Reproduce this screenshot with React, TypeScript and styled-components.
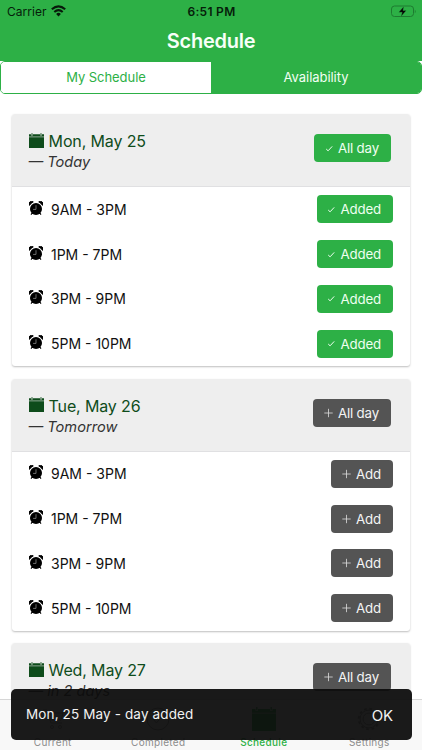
import React from 'react';
import styled, { createGlobalStyle, css } from 'styled-components';

const GREEN = '#2db046';

const GlobalStyle = createGlobalStyle`
  *, *::before, *::after { box-sizing: border-box; }
  body {
    margin: 0;
    overflow: hidden;
    background: #fff;
    font-family: Inter, "Liberation Sans", sans-serif;
  }
`;

const Screen = styled.div`
  position: relative;
  width: 422px;
  height: 750px;
  overflow: hidden;
  background: #fff;
`;

const Header = styled.header`
  height: 61px;
  background: ${GREEN};
`;

const StatusBar = styled.div`
  display: grid;
  grid-template-columns: 1fr auto 1fr;
  align-items: center;
  height: 22px;
  padding: 0 6px 0 7px;
  font-size: 12px;
  color: #061d0a;
`;

const Carrier = styled.span`
  display: flex;
  align-items: center;
  gap: 4px;
  letter-spacing: 0.05px;
`;

const Clock = styled.span`
  font-weight: 600;
  letter-spacing: 0.3px;
`;

const Power = styled.span`
  display: flex;
  justify-content: flex-end;
`;

const Title = styled.h1`
  margin: 0;
  height: 39px;
  line-height: 39px;
  text-align: center;
  color: #f7fff8;
  font-size: 20px;
  font-weight: 600;
  letter-spacing: -0.25px;
`;

const SegmentBack = styled.div`
  height: 33px;
  background: #fff;
`;

const Segments = styled.div`
  display: flex;
  height: 33px;
  border: 1px solid ${GREEN};
  border-radius: 5px;
  overflow: hidden;
`;

const Segment = styled.div<{ $active?: boolean }>`
  flex: 1;
  text-align: center;
  line-height: 31px;
  font-size: 13px;
  letter-spacing: -0.05px;
  color: ${p => (p.$active ? '#f1fff3' : GREEN)};
  background: ${p => (p.$active ? GREEN : '#fff')};
`;

const List = styled.main`
  display: flex;
  flex-direction: column;
  gap: 12.5px;
  padding: 20px 12px 0;
`;

const Card = styled.section`
  flex: none;
  height: 252px;
  border-radius: 3px;
  background: #fff;
  box-shadow: 0 1px 2px rgba(0, 0, 0, 0.26);
  overflow: hidden;
`;

const CardHead = styled.div`
  display: flex;
  justify-content: space-between;
  height: 73px;
  padding: 15px 19px 0 16.6px;
  background: #eee;
  border-bottom: 1px solid #e0e0e2;
`;

const DayTitle = styled.div`
  display: flex;
  align-items: center;
  gap: 5px;
  height: 24px;
  color: #0e4c1b;
  font-size: 16px;
  letter-spacing: -0.14px;

  svg {
    margin-top: -2px;
  }
`;

const DayNote = styled.div`
  line-height: 18px;
  font-size: 14.6px;
  font-style: italic;
  color: #333;
`;

const ButtonHolder = styled.div`
  padding-top: 5px;
`;

const Action = styled.button<{ $on?: boolean; $tight?: boolean }>`
  display: flex;
  align-items: center;
  justify-content: center;
  gap: 4px;
  height: 28px;
  padding: 0 12px 0 ${p => (p.$tight ? 10 : 11)}px;
  border: 0;
  border-radius: 4px;
  font-family: inherit;
  font-size: 13.3px;
  letter-spacing: -0.16px;
  line-height: 28px;
  white-space: nowrap;
  color: #f4f4f4;
  background: #545454;
  ${p => p.$on && css`
    color: #effff0;
    background: ${GREEN};
  `}
`;

const Slot = styled.div`
  display: flex;
  align-items: center;
  height: 44.75px;
  padding: 0 17px 0 16.6px;

  > svg {
    margin-top: -2px;
  }
`;

const SlotTime = styled.span`
  flex: 1;
  margin-left: 8.4px;
  font-size: 14px;
  color: #111;
`;

const TabBar = styled.nav`
  position: absolute;
  left: 0;
  right: 0;
  bottom: 0;
  display: grid;
  grid-template-columns: repeat(4, 1fr);
  height: 51px;
  background: #f8f8f8;
  border-top: 1px solid #d6d6d6;
`;

const Tab = styled.div<{ $active?: boolean }>`
  display: flex;
  flex-direction: column;
  align-items: center;
  padding-top: 7px;
  font-size: 10px;
  letter-spacing: 0.3px;
  font-weight: ${p => (p.$active ? 500 : 400)};
  color: ${p => (p.$active ? GREEN : '#8c8c8c')};
`;

const TabLabel = styled.span`
  margin-top: 5px;
  line-height: 12px;
`;

const Toast = styled.div`
  position: absolute;
  left: 10.5px;
  right: 10.5px;
  top: 688.5px;
  display: flex;
  align-items: center;
  justify-content: space-between;
  height: 51px;
  padding: 0 18.5px 0 15.5px;
  border-radius: 5px;
  background: rgba(12, 12, 12, 0.94);
  color: #f2f2f2;
  font-size: 13.5px;
  letter-spacing: 0.13px;
`;

const ToastText = styled.span``;

const ToastButton = styled.span`
  font-size: 15px;
  letter-spacing: -0.2px;
  padding-top: 2px;
`;

const Wifi = () => (
  <svg width="15" height="12" viewBox="0 0 15 12" fill="none" stroke="#071a0a" strokeWidth="2.1">
    <path d="M.8 4.2Q7.5-1.6 14.2 4.2M3.3 7Q7.5 3.3 11.7 7" />
    <path d="M5.1 8.9Q7.5 6.8 9.9 8.9L7.5 11.4Z" fill="#071a0a" stroke="none" />
  </svg>
);

const Battery = () => (
  <svg width="25" height="13" viewBox="0 0 25 13">
    <rect x=".5" y="1" width="22" height="10.5" rx="3" fill="none" stroke="#1e7b30" />
    <path d="M23.8 4.8c1.2.7 1.2 2.7 0 3.4Z" fill="#1e7b30" />
    <path d="M12.8 1.5 7.7 7.3h3.5L10 11.5l5.3-6H12Z" fill="#050505" stroke={GREEN} strokeWidth=".3" />
  </svg>
);

const Calendar = ({ size = 15, color = '#0e4c1b' }: { size?: number; color?: string }) => (
  <svg width={size} height={size} viewBox="0 0 15 15" fill={color}>
    <path d="M0 1.2h2.2v1.2h1.5V1.2h7.6v1.2h1.5V1.2H15v2.4H0ZM0 4.2h15V15H0Z" />
    <path d="M0 3.5h15v.8H0Z" opacity=".6" />
    <path d="M2.6 0h.8v2h-.8ZM11.6 0h.8v2h-.8Z" />
  </svg>
);

const Alarm = () => (
  <svg width="14" height="15" viewBox="0 0 14 15">
    <path d="M.5 4.4A2.6 2.6 0 0 1 4.3.9Q1.8 1.9.5 4.4ZM13.5 4.4A2.6 2.6 0 0 0 9.7.9Q12.2 1.9 13.5 4.4Z" fill="#000" stroke="#000" strokeWidth=".9" />
    <circle cx="7" cy="7.9" r="6" fill="#000" />
    <path d="m3.2 12-1.2 1.6M10.8 12l1.2 1.6" stroke="#000" strokeWidth="1.2" />
    <path d="M7 4.2v4.2H4.1" fill="none" stroke="#999" strokeWidth=".7" />
  </svg>
);

const Check = () => (
  <svg width="9" height="9" viewBox="0 0 9 9" fill="none" stroke="#edffef" strokeWidth="1">
    <path d="m1.2 5 1.9 1.8 4.1-4.4" />
  </svg>
);

const Plus = () => (
  <svg width="10" height="10" viewBox="0 0 10 10" stroke="#ddd" strokeWidth=".8">
    <path d="M4.5 .8v8.4M.3 5h8.4" />
  </svg>
);

const Cart = () => (
  <svg width="24" height="24" viewBox="0 0 24 24" fill="none" stroke="#999">
    <path d="M2 3h4l4 13h11M6.5 6H22l-2 7H9" />
    <circle cx="11" cy="20" r="1.5" /><circle cx="19" cy="20" r="1.5" />
  </svg>
);

const Done = () => (
  <svg width="24" height="24" viewBox="0 0 24 24" fill="none" stroke="#999">
    <circle cx="12" cy="12" r="11" /><path d="m7 12 3.5 4L17 8" />
  </svg>
);

const Gear = () => (
  <svg width="24" height="24" viewBox="0 0 24 24" fill="none" stroke="#999">
    <circle cx="12" cy="12" r="6" />
    <circle cx="12" cy="12" r="9" />
    <circle cx="12" cy="12" r="10.3" strokeWidth="1.8" strokeDasharray="2.7 2.7" />
  </svg>
);

const times = ['9AM - 3PM', '1PM - 7PM', '3PM - 9PM', '5PM - 10PM'];
const days = [
  { title: 'Mon, May 25', note: 'Today', added: true },
  { title: 'Tue, May 26', note: 'Tomorrow', added: false },
  { title: 'Wed, May 27', note: 'in 2 days', added: false },
];

export default function App() {
  return (
    <Screen>
      <GlobalStyle />
      <Header>
        <StatusBar>
          <Carrier>Carrier <Wifi /></Carrier>
          <Clock>6:51 PM</Clock>
          <Power><Battery /></Power>
        </StatusBar>
        <Title>Schedule</Title>
      </Header>
      <SegmentBack>
        <Segments>
          <Segment>My Schedule</Segment>
          <Segment $active>Availability</Segment>
        </Segments>
      </SegmentBack>
      <List>
        {days.map(day => (
          <Card key={day.title}>
            <CardHead>
              <div>
                <DayTitle><Calendar />{day.title}</DayTitle>
                <DayNote>— {day.note}</DayNote>
              </div>
              <ButtonHolder>
                <Action $on={day.added}>{day.added ? <Check /> : <Plus />}All day</Action>
              </ButtonHolder>
            </CardHead>
            {times.map(time => (
              <Slot key={time}>
                <Alarm />
                <SlotTime>{time}</SlotTime>
                <Action $on={day.added} $tight={day.added}>
                  {day.added ? <Check /> : <Plus />}{day.added ? 'Added' : 'Add'}
                </Action>
              </Slot>
            ))}
          </Card>
        ))}
      </List>
      <TabBar>
        <Tab><Cart /><TabLabel>Current</TabLabel></Tab>
        <Tab><Done /><TabLabel>Completed</TabLabel></Tab>
        <Tab $active><Calendar size={24} color={GREEN} /><TabLabel>Schedule</TabLabel></Tab>
        <Tab><Gear /><TabLabel>Settings</TabLabel></Tab>
      </TabBar>
      <Toast>
        <ToastText>Mon, 25 May - day added</ToastText>
        <ToastButton>OK</ToastButton>
      </Toast>
    </Screen>
  );
}
